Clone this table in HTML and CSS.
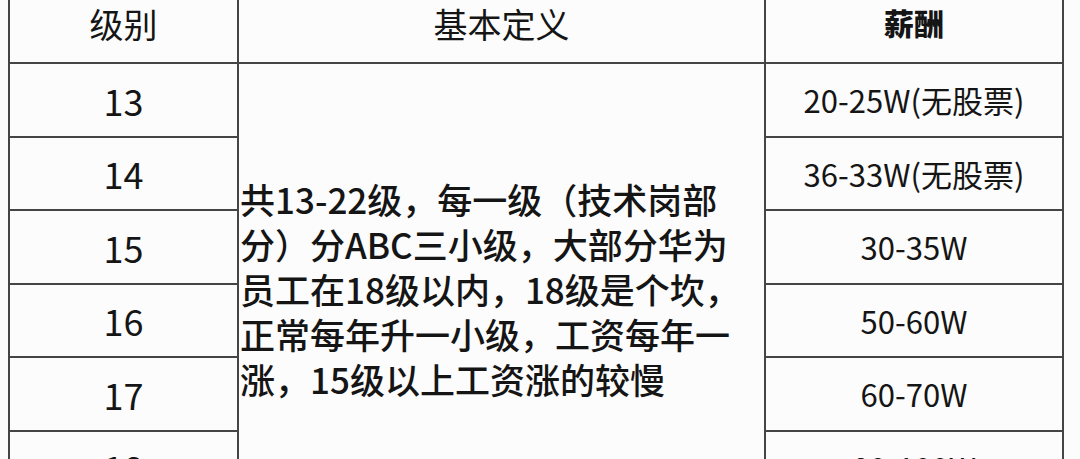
FILE: index.html
```html
<!DOCTYPE html>
<html lang="zh-CN">
<head>
<meta charset="utf-8">
<title>华为职级薪酬</title>
<link rel="stylesheet" href="styles.css">
</head>
<body>
<div class="sheet">
  <div class="cell head">级别</div>
  <div class="cell head">基本定义</div>
  <div class="cell head head-bold">薪酬</div>

  <div class="cell level">13</div>
  <div class="cell desc">共13-22级，每一级（技术岗部<br>分）分ABC三小级，大部分华为<br>员工在18级以内，18级是个坎，<br>正常每年升一小级，工资每年一<br>涨，15级以上工资涨的较慢</div>
  <div class="cell pay">20-25W(无股票)</div>

  <div class="cell level">14</div>
  <div class="cell pay">36-33W(无股票)</div>

  <div class="cell level">15</div>
  <div class="cell pay">30-35W</div>

  <div class="cell level">16</div>
  <div class="cell pay">50-60W</div>

  <div class="cell level">17</div>
  <div class="cell pay">60-70W</div>

  <div class="cell level">18</div>
  <div class="cell pay">80-100W</div>
</div>
</body>
</html>
```

FILE: styles.css
```css
html, body {
  margin: 0;
  padding: 0;
  background: #fcfcfc;
  overflow: hidden;
}

body {
  width: 1080px;
  height: 459px;
  font-family: "Noto Sans CJK SC", "Noto Sans", sans-serif;
  color: #151515;
}

.sheet {
  display: grid;
  grid-template-columns: 227px 525px 296px;
  grid-template-rows: 72px 71.5px 71.5px 71.5px 71.5px 71.5px 71.5px;
  gap: 2px;
  padding: 2px;
  background: #454545;
  width: 1052px;
  margin: -12px 0 0 8px;
}

.cell {
  background: #fcfcfc;
  display: flex;
  align-items: center;
  justify-content: center;
  white-space: nowrap;
}

.head {
  font-size: 34px;
  padding-bottom: 5px;
}

.head-bold {
  font-size: 30px;
  font-weight: 900;
  padding-bottom: 8px;
}

.level {
  font-size: 36px;
}

.pay {
  font-size: 31px;
}

.desc {
  grid-column: 2;
  grid-row: 2 / span 6;
  align-items: flex-start;
  justify-content: flex-start;
  padding: 112px 0 0 1px;
  font-size: 35px;
  line-height: 45px;
  font-weight: 500;
}
```
